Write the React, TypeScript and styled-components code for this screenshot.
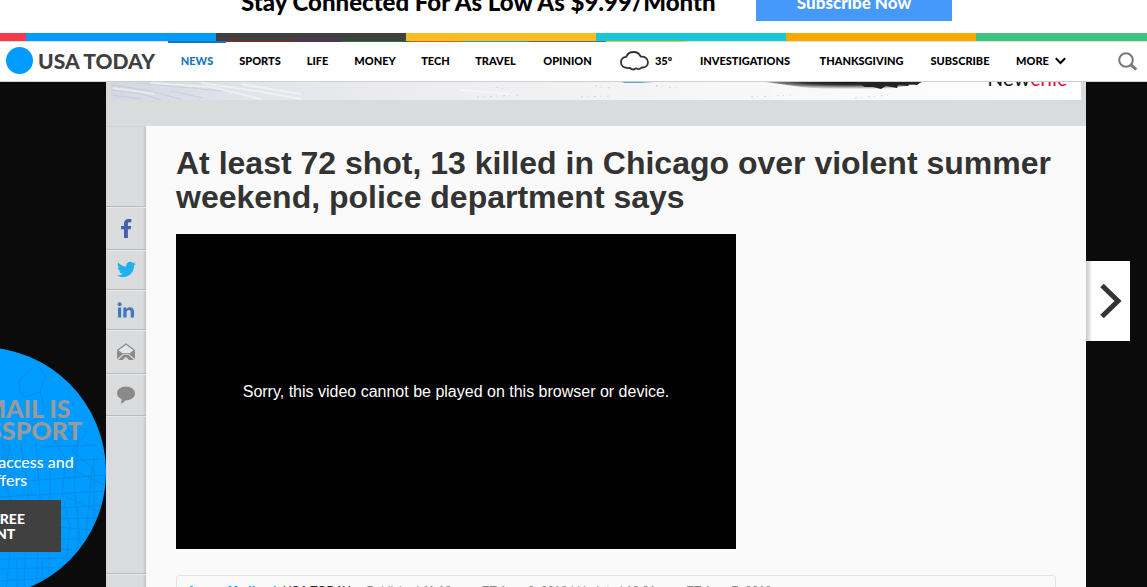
import React from "react";
import styled, { createGlobalStyle } from "styled-components";

const display = `Lato, "Open Sans", sans-serif`;
const body = `"Liberation Sans", Arial, sans-serif`;

const Global = createGlobalStyle`
  * { box-sizing: border-box; }
  body { margin: 0; background: #0b0b0b; font-family: ${body}; }
  a { color: inherit; text-decoration: none; }
  button { border: 0; padding: 0; cursor: pointer; }
`;

const Page = styled.div`
  position: relative;
  display: flex;
  flex-direction: column;
  height: 100vh;
  overflow: hidden;
`;

const Promo = styled.aside`
  display: flex;
  flex: none;
  align-items: flex-end;
  justify-content: space-between;
  height: 33px;
  padding: 0 195px 12px 241px;
  background: #fff;
`;

const PromoText = styled.p`
  margin: 0;
  padding-bottom: 5px;
  font: 900 24px/28px ${display};
  color: #000;
  white-space: nowrap;
`;

const PromoButton = styled.button`
  width: 196px;
  height: 36px;
  background: #4599fa;
  color: #fff;
  font: 900 17px/20px ${display};
`;

const Stripe = styled.div`
  display: flex;
  flex: none;
  height: 8px;
`;

const StripePart = styled.span<{ $color: string; $width?: number }>`
  flex: ${(p) => (p.$width ? `0 0 ${p.$width}px` : "1")};
  background: ${(p) => p.$color};
`;

const Nav = styled.nav`
  display: flex;
  flex: none;
  height: 41px;
  background: #fff;
  border-bottom: 1px solid #cfcfcf;
`;

const Logo = styled.a`
  display: flex;
  align-items: center;
  gap: 5px;
  width: 168px;
  padding: 0 0 2px 6px;
  border-top: 1px solid #ddd;
  color: #404040;
  font: 900 21px/24px ${display};
  white-space: nowrap;
`;

const LogoDot = styled.span`
  flex: none;
  width: 27px;
  height: 27px;
  border-radius: 50%;
  background: #009bff;
`;

const NavLink = styled.a<{ $width: number; $line: string; $active?: boolean }>`
  display: flex;
  align-items: center;
  justify-content: center;
  gap: 6px;
  width: ${(p) => p.$width}px;
  box-shadow: inset 0 ${(p) => (p.$active ? 2 : 1)}px ${(p) => p.$line};
  color: ${(p) => (p.$active ? "#1877b9" : "#000")};
  font: 900 11px/16px ${display};
  white-space: nowrap;
`;

const Search = styled.button`
  display: flex;
  flex: 1;
  align-items: center;
  justify-content: flex-end;
  padding-right: 9px;
  background: #fff;
  border-top: 1px solid #ddd;
`;

const Column = styled.div`
  display: flex;
  flex: 1;
  flex-direction: column;
  min-height: 0;
  margin: 0 61px 0 106px;
  background: #dadbdd;
`;

const Ad = styled.a`
  display: flex;
  flex: none;
  justify-content: flex-end;
  position: relative;
  height: 18px;
  margin: 0 5px 26px;
  overflow: hidden;
  background: #f6f6f7;
`;

const AdArt = styled.svg`
  position: absolute;
  inset: 0;
  width: 100%;
  height: 100%;
`;

const AdBrand = styled.span`
  position: relative;
  margin: -18px 14px 0 0;
  height: 24px;
  font: 400 21px/28px ${display};
  color: #111;
  em { font-style: normal; color: #e5173f; }
`;

const Columns = styled.div`
  display: flex;
  flex: 1;
  min-height: 0;
`;

const Share = styled.div`
  flex: 0 0 40px;
  padding-top: 79px;
  border-top: 1px solid #d2d3d5;
  background: linear-gradient(to right, #dadbdd 36px, #d2d3d5 38px, #bfc0c1 40px);
`;

const ShareLink = styled.a<{ $height: number }>`
  display: flex;
  align-items: center;
  justify-content: center;
  height: ${(p) => p.$height}px;
  border-top: 1px solid #b8b9bb;
  box-shadow: inset 0 1px #e6e7e8;
`;

const Article = styled.main`
  flex: 1;
  padding: 20px 30px 0;
  background: #fafafa;
`;

const Title = styled.h1`
  margin: 0;
  font: 700 32px/34px ${body};
  color: #333;
`;

const Video = styled.div`
  display: flex;
  align-items: center;
  justify-content: center;
  width: 560px;
  max-width: 100%;
  height: 315px;
  margin: 20px 0 26px;
  background: #000;
  color: #fff;
  font: 16px/20px ${body};
`;

const Byline = styled.div`
  height: 60px;
  padding: 7px 10px;
  border: 1px solid #e3e3e3;
  border-radius: 3px;
  color: #888;
  font: 12px/16px ${body};
  a { color: #009bff; font-weight: 700; }
  b { color: #222; margin-right: 16px; font-weight: 400; }
`;

const Next = styled.button`
  position: absolute;
  top: 261px;
  right: 17px;
  display: flex;
  align-items: center;
  justify-content: flex-end;
  width: 44px;
  height: 80px;
  padding-right: 7px;
  background: linear-gradient(to right, #c9c9c9, #e8e8e8 4px, #fff 6px);
`;

const Signup = styled.section`
  position: absolute;
  left: -144px;
  top: 347px;
  display: flex;
  flex-direction: column;
  align-items: center;
  width: 250px;
  height: 250px;
  padding-top: 50px;
  overflow: hidden;
  border-radius: 50%;
  background: #009bff;
  color: #fff;
  text-align: center;
  white-space: nowrap;
`;

const SignupMap = styled.svg`
  position: absolute;
  inset: 0;
`;

const SignupTitle = styled.h2`
  position: relative;
  margin: 0 0 12px;
  color: #9a9a9a;
  font: 900 25px/22px ${display};
`;

const SignupText = styled.p`
  position: relative;
  margin: 0 0 11px;
  font: 500 16px/18px ${display};
`;

const SignupButton = styled.button`
  position: relative;
  width: 160px;
  height: 52px;
  background: #404040;
  color: #fff;
  font: 900 14px/15px ${display};
`;

const links = [
  { label: "NEWS", width: 58, line: "#1877b9", active: true },
  { label: "SPORTS", width: 68, line: "#a02020" },
  { label: "LIFE", width: 47, line: "#6a1b8a" },
  { label: "MONEY", width: 68, line: "#1c7a3c" },
  { label: "TECH", width: 53, line: "#c8641e" },
  { label: "TRAVEL", width: 67, line: "#1aa0a8" },
  { label: "OPINION", width: 77, line: "#6a6a6a" },
  { label: "35º", width: 80, line: "#f0c830", icon: "cloud" },
  { label: "INVESTIGATIONS", width: 118, line: "#ddd" },
  { label: "THANKSGIVING", width: 115, line: "#ddd" },
  { label: "SUBSCRIBE", width: 82, line: "#ddd" },
  { label: "MORE", width: 80, line: "#ddd", icon: "chevron" },
];

const stripes = [
  { color: "#f23c4c", width: 26 },
  { color: "#009bff", width: 190 },
  { color: "#404040", width: 190 },
  { color: "#ffbb22", width: 190 },
  { color: "#18c8d4", width: 190 },
  { color: "#ffa500", width: 190 },
  { color: "#3ec481" },
];

const Cloud = () => (
  <svg width="29" height="20" viewBox="0 0 29 20" fill="none" stroke="#333" strokeWidth="1.8" strokeLinejoin="round">
    <path d="M7 16.8C3.600 16.800 1 14.500 1 11.300C1 8.200 3.200 6 6.200 5.800C7.400 3 10.100 1 13.500 1C17 1 19.600 2.900 20.700 5.700C24.800 5.200 28 7.600 28 11.200C28 14.800 24.900 17 21.600 16.400C20.300 18.300 17.600 18.600 16.100 17.200C14 19.200 11.200 18.700 10 16.800C9 17.200 8 17.200 7 16.800Z" />
  </svg>
);

const Chevron = () => (
  <svg width="11" height="8" viewBox="0 0 11 8" fill="none" stroke="#000" strokeWidth="2">
    <path d="M.8 1.200 5.500 6 10.200 1.200" />
  </svg>
);

const shareItems = [
  { label: "Facebook", height: 43, icon: (
    <svg width="11" height="19" viewBox="0 0 11 19"><path fill="#4460ad" d="M3 19V10.300H0V7H3V5C3 1.700 4.700 0 7.600 0H10.300V3.300H8.600C7.300 3.300 6.900 3.900 6.900 5V7H10.200L9.700 10.300H6.900V19Z" /></svg>) },
  { label: "Twitter", height: 40, icon: (
    <svg width="19" height="17" viewBox="0 2 24 20"><path fill="#1eb1ee" d="M24 4.600a10 10 0 0 1-2.800.8 5 5 0 0 0 2.100-2.700c-1 .6-2 1-3.100 1.200a4.900 4.900 0 0 0-8.400 4.500C7.700 8.200 4.100 6.200 1.700 3.100a4.900 4.900 0 0 0 1.500 6.600c-.8 0-1.600-.2-2.200-.6v.1a4.900 4.900 0 0 0 3.900 4.800c-.7.2-1.500.2-2.200.1a4.900 4.900 0 0 0 4.600 3.400A9.900 9.900 0 0 1 0 19.500 13.900 13.900 0 0 0 7.500 21.700c9.100 0 14-7.500 14-14v-.6A10 10 0 0 0 24 4.600Z" /></svg>) },
  { label: "LinkedIn", height: 40, icon: (
    <svg width="18" height="16" viewBox="0 0 18 16"><path fill="#4078bd" d="M1 5.500H4.200V15.500H1ZM6.300 5.500H9.400V7C10.200 5.700 11.300 5.200 12.700 5.200C15.800 5.200 17 7 17 9.800V15.500H13.700V10.300C13.700 8.800 13.200 8 12 8C10.400 8 9.600 9 9.600 10.600V15.500H6.300Z" /><circle cx="2.600" cy="2.200" r="2" fill="#4078bd" /></svg>) },
  { label: "Email", height: 44, icon: (
    <svg width="18" height="17" viewBox="0 0 18 17"><path d="M.6 7.300 9 1 17.400 7.300 13 10.800H5Z" fill="#e4e5e6" stroke="#8a8a8a" strokeWidth="1.100" /><path fill="#898989" d="M0 7.500 5.500 11.500 0 16ZM18 7.500 12.500 11.500 18 16ZM1 17 6.500 12H11.500L17 17H12L9 13.800 5.500 17Z" /></svg>) },
  { label: "Comments", height: 42, icon: (
    <svg width="18" height="18" viewBox="0 0 18 18"><path fill="#898989" d="M9 .5C4 .5 0 3.500 0 7.300C0 9.800 1.800 12 4.600 13.200C4.700 15 4.200 16.500 3.500 17.600C6 17 7.700 15.700 8.600 14.200C13.800 14.300 18 11.300 18 7.400C18 3.500 14 .5 9 .5Z" /></svg>) },
];

export default function App() {
  return (
    <Page>
      <Global />
      <Promo>
        <PromoText>Stay Connected For As Low As $9.99/Month</PromoText>
        <PromoButton>Subscribe Now</PromoButton>
      </Promo>
      <Stripe>
        {stripes.map((s) => <StripePart key={s.color} $color={s.color} $width={s.width} />)}
      </Stripe>
      <Nav>
        <Logo href="#"><LogoDot />USA TODAY</Logo>
        {links.map((l) => (
          <NavLink key={l.label} href="#" $width={l.width} $line={l.line} $active={l.active}>
            {l.icon === "cloud" && <Cloud />}
            {l.label}
            {l.icon === "chevron" && <Chevron />}
          </NavLink>
        ))}
        <Search aria-label="Search">
          <svg width="20" height="19" viewBox="0 0 20 19" fill="none" stroke="#777">
            <circle cx="8" cy="8" r="6.800" strokeWidth="2" />
            <path d="M13 12.800 18.300 17.500" strokeWidth="3" />
          </svg>
        </Search>
      </Nav>
      <Column>
        <Ad href="#">
          <AdArt viewBox="0 0 970 18" preserveAspectRatio="none" aria-hidden="true">
            <defs>
              <linearGradient id="snow"><stop offset="0" stopColor="#d2d7e1" /><stop offset=".14" stopColor="#e2e4ea" /><stop offset=".3" stopColor="#ececef" /><stop offset=".6" stopColor="#f6f6f6" /><stop offset="1" stopColor="#fff" /></linearGradient>
              <radialGradient id="sole" cx=".55" cy="0" r=".8"><stop offset="0" stopColor="#111" /><stop offset=".4" stopColor="#333" /><stop offset="1" stopColor="#555" stopOpacity="0" /></radialGradient>
            </defs>
            <path fill="url(#snow)" d="M0 0H970V18H0Z" />
            <path fill="none" stroke="#bcc5d3" strokeWidth="1.200" opacity=".6" d="M0 3 34 8 70 17M0 8 28 11 50 18M0 13 30 17M26 1 70 5 112 9M60 9 92 16" />
            <path fill="none" stroke="#fff" strokeWidth="2" opacity=".45" d="M40 1 100 5 150 17M90 1 145 9 190 17M2 6 44 12M350 8 400 12M130 2 190 12" />
            <path fill="none" stroke="#c9ccd2" strokeWidth="1" strokeDasharray="2 4 1 6" opacity=".8" d="M366 15 410 13M385 5 397 8M470 15 500 14M484 4 500 6M640 15 680 13M744 16 780 13M545 4 570 6" />
            <path fill="#5ba9d9" d="M510 0H542L530 1H514Z" />
            <path fill="url(#sole)" d="M655 0H812L800 3 788 5 770 8 748 9 720 8 690 5Z" />
            <path fill="#222" d="M745 0H810L806 3 798 2 797 4 787 3 786 6 775 4 770 7 762 5 754 5Z" />
          </AdArt>
          <AdBrand>New<em>chic</em></AdBrand>
        </Ad>
        <Columns>
          <Share>
            {shareItems.map((s) => (
              <ShareLink key={s.label} href="#" aria-label={s.label} $height={s.height}>{s.icon}</ShareLink>
            ))}
            <ShareLink as="div" $height={158} />
            <ShareLink as="div" $height={40} />
          </Share>
          <Article>
            <Title>At least 72 shot, 13 killed in Chicago over violent summer weekend, police department says</Title>
            <Video>Sorry, this video cannot be played on this browser or device.</Video>
            <Byline>
              <a href="#">Aamer Madhani</a>, <b>USA TODAY</b>
              Published 11:12 a.m. ET Aug. 6, 2018 | Updated 10:31 a.m. ET Aug. 7, 2018
            </Byline>
          </Article>
        </Columns>
      </Column>
      <Next aria-label="Next article">
        <svg width="24" height="36" viewBox="0 0 24 36" fill="none" stroke="#333436" strokeWidth="5">
          <path d="M3 2.500 19 18 3 33.500" />
        </svg>
      </Next>
      <Signup>
        <SignupMap width="250" height="250" viewBox="0 0 250 250" fill="none" stroke="#0a8be6" strokeWidth="1" aria-hidden="true">
          <path d="M176 20 163 34 164 45 170 50 184 45 189 29 183 20M184 45 189 62 178 78 164 80M204 62 196 90 210 112 206 146 214 180 207 240M218 55 204 76 222 92 218 140 226 210M232 84 216 104 236 120 230 190M146 84 154 102 146 130 158 160 150 246M165 98 172 140 168 240M180 96 184 150 180 244M194 110 193 240M144 136 248 128M144 150 250 144M160 164 250 158M176 172 250 171M200 180 248 184M200 192 244 192M200 202 238 203M144 212 234 211M144 222 222 220M144 234 210 230M166 116 246 112M186 100 240 98M210 150 246 166M212 120 248 138M238 110 238 200M161 214 161 248M186 214 186 244M222 160 222 212" />
          <path fill="#0a8be6" fillOpacity=".4" stroke="none" d="M146 96 156 104 160 132 152 146 144 138Z" />
        </SignupMap>
        <SignupTitle>YOUR EMAIL IS<br />YOUR PASSPORT</SignupTitle>
        <SignupText>enjoy exclusive access and<br />special offers</SignupText>
        <SignupButton>GET MY FREE<br />ACCOUNT</SignupButton>
      </Signup>
    </Page>
  );
}
